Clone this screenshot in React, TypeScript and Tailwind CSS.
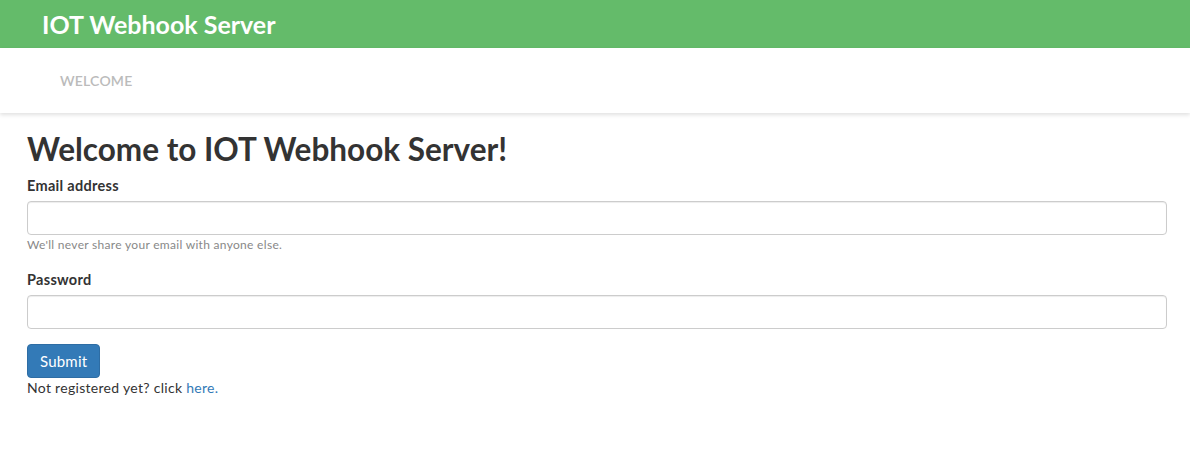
export default function App() {
  return (
    <div className="min-h-[456px] bg-white text-[#333] font-['Lato','Open_Sans',sans-serif]">
      {/* Header */}
      <header className="h-12 bg-[#64bb6a] flex items-center pl-[42px]">
        <span className="text-white text-[25px] font-bold leading-none">IOT Webhook Server</span>
      </header>

      {/* Nav */}
      <nav className="h-[65px] flex items-center pl-[60px] shadow-[0_2px_4px_rgba(0,0,0,0.12)]">
        <span className="text-[14px] font-semibold text-[#bbb] tracking-[0.2px]">WELCOME</span>
      </nav>

      {/* Main */}
      <main className="pl-[27px] pr-[23px] pt-[17px]">
        <h1 className="text-[31.5px] font-bold leading-[38px] text-[#333]">
          Welcome to IOT Webhook Server!
        </h1>
        <form className="mt-[8px]" onSubmit={(e) => e.preventDefault()}>
          <div>
            <label className="block text-[14.5px] font-bold mb-[5px] leading-5 tracking-[0.3px]">
              Email address
            </label>
            <input
              type="email"
              className="block w-full h-[34px] border border-[#ccc] rounded-[4px] px-3 shadow-[inset_0_1px_1px_rgba(0,0,0,0.075)]"
            />
            <small className="block mt-[3px] text-[12px] text-[#888] leading-[14px] tracking-[0.3px]">
              We'll never share your email with anyone else.
            </small>
          </div>
          <div className="mt-[18px]">
            <label className="block text-[14.5px] font-bold mb-[5px] leading-5 tracking-[0.3px]">
              Password
            </label>
            <input
              type="password"
              className="block w-full h-[34px] border border-[#ccc] rounded-[4px] px-3 shadow-[inset_0_1px_1px_rgba(0,0,0,0.075)]"
            />
          </div>
          <button
            type="submit"
            className="block mt-[15px] h-[34px] px-3 bg-[#337ab7] border border-[#2e6da4] rounded-[4px] text-white text-[15px] tracking-[0.2px]"
          >
            Submit
          </button>
        </form>
        <p className="text-[14px] leading-5 tracking-[0.3px]">
          Not registered yet? click <a href="#" className="text-[#337ab7]">here.</a>
        </p>
      </main>
    </div>
  );
}
